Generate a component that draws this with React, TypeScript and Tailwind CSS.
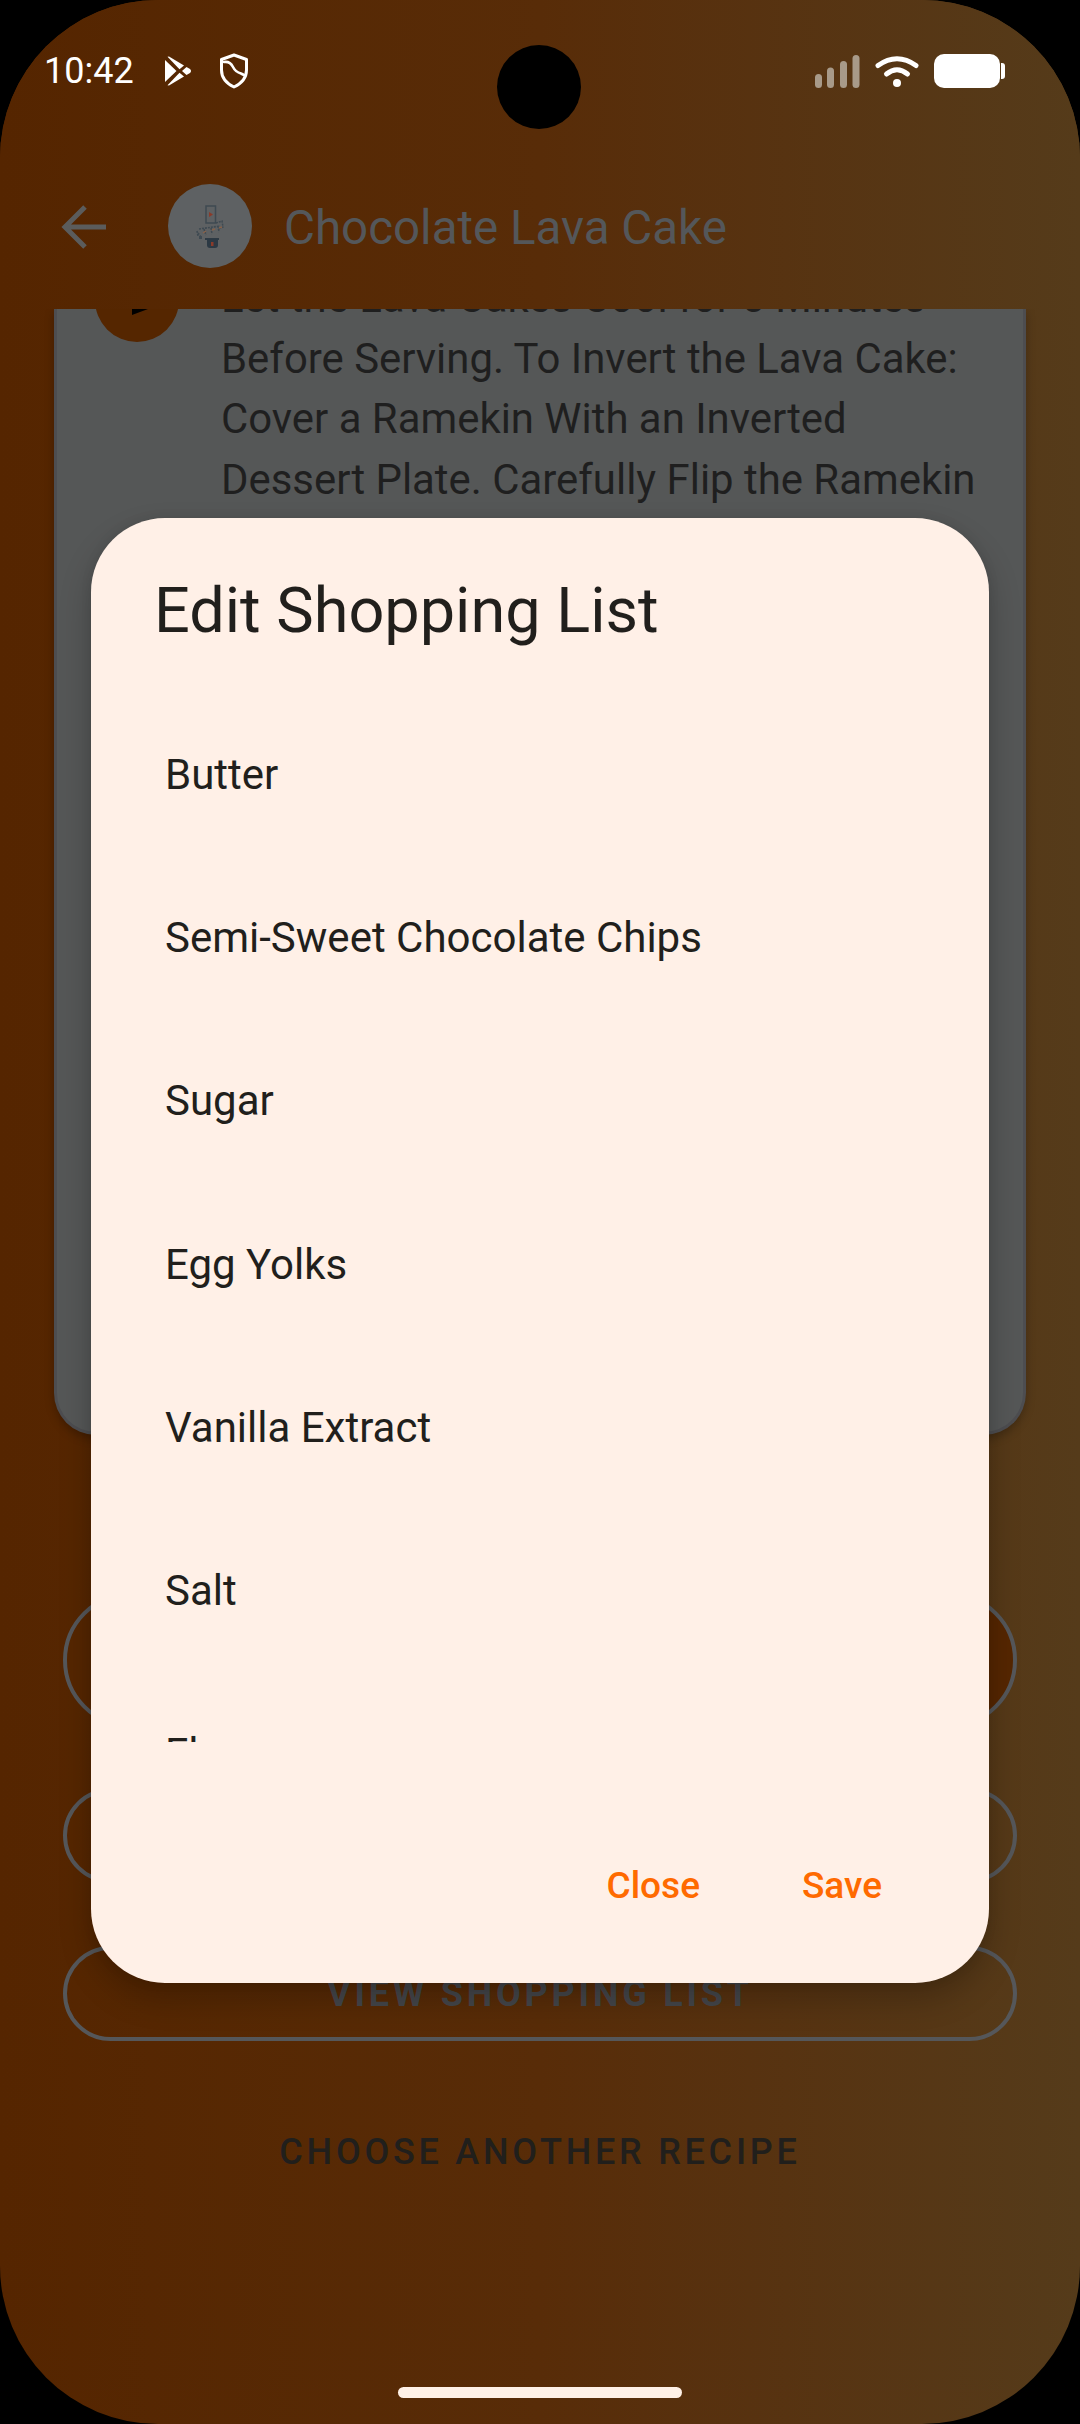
import React from "react";

const items = ["Butter", "Semi-Sweet Chocolate Chips", "Sugar", "Egg Yolks", "Vanilla Extract", "Salt", "Flour"];

function PlayIcon() {
  return (
    <svg width="28" height="30" viewBox="0 0 28 30" className="ml-[30px]">
      <path d="M1 4 L1 26 L12.5 15 Z" fill="#fff" />
      <path d="M3.5 0.8 L5 0.5 L20 9.5 L15.5 13.3 Z" fill="#fff" />
      <path d="M3.5 29.2 L5 29.5 L20 20.5 L15.5 16.7 Z" fill="#fff" />
      <path d="M18 14.9 L22.5 11 L26 13 Q28 15 26 17 L22.5 19 Z" fill="#fff" />
    </svg>
  );
}

function ShieldIcon() {
  return (
    <svg width="30" height="36" viewBox="0 0 30 36" className="ml-[27px]" fill="none" stroke="#fff" strokeWidth="3">
      <path d="M15 2 L27.5 6.5 L27.5 17 Q27.5 28 15 34 Q2.5 28 2.5 17 L2.5 6.5 Z" strokeLinejoin="round" />
      <path d="M5 9 Q11 8 14 14 Q16.5 19 22 20.5 L25 22" strokeLinecap="round" strokeWidth="2.6" />
    </svg>
  );
}

function SignalIcon() {
  return (
    <svg width="46" height="33" viewBox="0 0 46 33">
      <rect x="1" y="19" width="7" height="14" rx="3.5" fill="#a89a89" />
      <rect x="13" y="12.5" width="7" height="20.5" rx="3.5" fill="#a89a89" />
      <rect x="26" y="6" width="7" height="27" rx="3.5" fill="#a89a89" />
      <rect x="38.5" y="0" width="7" height="33" rx="3.5" fill="#a89a89" />
    </svg>
  );
}

function WifiIcon() {
  return (
    <svg width="44" height="33" viewBox="0 0 44 33" fill="none" stroke="#fff" strokeWidth="5" strokeLinecap="round">
      <path d="M3 10.5 Q22 -3 41 10.5" />
      <path d="M11.5 19 Q22 10.5 32.5 19" />
      <circle cx="22" cy="28" r="4" fill="#fff" stroke="none" />
    </svg>
  );
}

function BatteryIcon() {
  return (
    <div className="flex items-center">
      <div className="w-[66px] h-[34px] rounded-[10px] bg-white" />
      <div className="ml-[1px] w-[4px] h-[16px] rounded-r-[3px] bg-white" />
    </div>
  );
}

function LogoIcon() {
  return (
    <svg width="84" height="84" viewBox="0 0 84 84">
      <rect x="38" y="22" width="9.5" height="17" fill="none" stroke="#3f4a52" strokeWidth="1.5" />
      <path d="M41 28 L45 30.5 L41 33 Z" fill="#8a3b2a" />
      <path d="M48 39 L54 37 L55 43 L50 45" fill="none" stroke="#3f4a52" strokeWidth="1.5" strokeDasharray="2 1" />
      <path d="M31 45 L52 42 M30 49 L33 53 M36 45 L38 51 M43 44 L44 50 M50 42 L51 48 M29 47 L30 52" fill="none" stroke="#3f4a52" strokeWidth="1.6" strokeDasharray="2 1" />
      <path d="M35 49 L38 47 M44 46 L47 45 M51 44 L54 43" stroke="#87624a" strokeWidth="1.5" />
      <rect x="31" y="52" width="3" height="3" fill="#3f4a52" />
      <rect x="37" y="54" width="14" height="2" fill="#2e3a44" />
      <path d="M39 55 L50 55 L50 61 Q50 64 47 64 L42 64 Q39 64 39 61 Z" fill="#2c3944" />
      <rect x="43" y="58" width="2.5" height="4" fill="#8a3b2a" />
    </svg>
  );
}

export default function App() {
  return (
    <div className="relative w-[1080px] h-[2424px] bg-black overflow-hidden [font-family:Roboto,sans-serif]">
      <div className="flex flex-col h-full rounded-[158px] overflow-hidden bg-gradient-to-r from-[#552500] via-[#582c08] to-[#553b1a]">
        <header className="relative z-10 h-[309px] shrink-0 bg-gradient-to-r from-[#552500] via-[#582c08] to-[#553b1a]">
          <div className="flex items-center h-[142px] pl-[44px] pr-[75px]">
            <span className="text-[36px] leading-none text-white">10:42</span>
            <PlayIcon />
            <ShieldIcon />
            <div className="flex-1" />
            <SignalIcon />
            <div className="ml-[15px]"><WifiIcon /></div>
            <div className="ml-[15px]"><BatteryIcon /></div>
          </div>
          <div className="flex items-center h-[84px] mt-[42px] pl-[60px]">
            <svg width="48" height="46" viewBox="0 0 48 46" fill="none" stroke="#5b5c5c" strokeWidth="5" className="mt-[2px]">
              <path d="M46 23 L6 23 M25 3 L5 23 L25 43" />
            </svg>
            <div className="ml-[60px] w-[84px] h-[84px] rounded-full bg-[#5e6163]"><LogoIcon /></div>
            <span className="ml-[32px] pt-[5px] text-[47.5px] leading-none text-[#54575a]">Chocolate Lava Cake</span>
          </div>
        </header>

        <main className="flex-1 flex flex-col px-[54px] min-h-0">
          <div className="h-[1127px] shrink-0 -mt-[1px] rounded-b-[42px] border-x-[3px] border-b-[3px] border-[#4d4d50] bg-[#555757] overflow-hidden shadow-[0_4px_10px_rgba(0,0,0,0.25)]">
            <div className="flex -mt-[40px] pl-[38px] gap-[42px]">
              <div className="relative w-[84px] h-[84px] rounded-full bg-[#552600] shrink-0 -mt-[10px] pl-[37px] flex items-center">
                <svg width="40" height="30" viewBox="0 0 40 30"><path d="M0 0 L40 15 L0 30 Z" fill="#000" /></svg>
              </div>
              <p className="text-[41.9px] leading-[60.5px] text-[#1f1f1f] whitespace-nowrap">
                Let the Lava Cakes Cool for 5 Minutes<br />
                Before Serving. To Invert the Lava Cake:<br />
                Cover a Ramekin With an Inverted<br />
                Dessert Plate. Carefully Flip the Ramekin
              </p>
            </div>
          </div>

          <div className="flex flex-col items-center mt-[157px]">
            <div className="w-[954px] h-[136px] rounded-full border-[4px] border-[#55575a] bg-[#552600]" />
            <div className="w-[954px] h-[95px] mt-[60px] rounded-full border-[4px] border-[#55575a]" />
            <div className="w-[954px] h-[95px] mt-[63px] rounded-full border-[4px] border-[#55575a] flex items-center justify-center">
              <span className="text-[36px] font-bold tracking-[3.8px] text-[#44464a] whitespace-nowrap">VIEW SHOPPING LIST</span>
            </div>
            <div className="mt-[86px] h-[50px] flex items-center text-[36px] font-medium tracking-[3.75px] text-[#211f1c] whitespace-nowrap">CHOOSE ANOTHER RECIPE</div>
          </div>
        </main>
      </div>

      <div className="absolute left-[398px] top-[2387px] w-[284px] h-[11px] rounded-full bg-[#fff1e7]" />
      <div className="absolute left-[497px] top-[45px] w-[84px] h-[84px] rounded-full bg-black z-20" />

      <div className="absolute z-30 left-[91px] top-[518px] w-[898px] h-[1465px] rounded-[74px] bg-[#fff0e7] shadow-[0_16px_32px_rgba(0,0,0,0.22),0_0_12px_rgba(0,0,0,0.08)] flex flex-col">
        <h2 className="pl-[63px] pt-[59.5px] h-[175px] shrink-0 text-[63px] leading-[66px] font-normal text-[#211f1c]">Edit Shopping List</h2>
        <div className="h-[1049px] shrink-0 overflow-hidden pl-[74px]">
          {items.map((t) => (
            <div key={t} className="h-[163.2px] flex items-center text-[42px] text-[#211f1c]">{t}</div>
          ))}
        </div>
        <div className="flex justify-end items-center pt-[125px] pr-[107px] gap-[102px] text-[37px] leading-none font-medium text-[#ff6a00]">
          <span>Close</span>
          <span>Save</span>
        </div>
      </div>
    </div>
  );
}
